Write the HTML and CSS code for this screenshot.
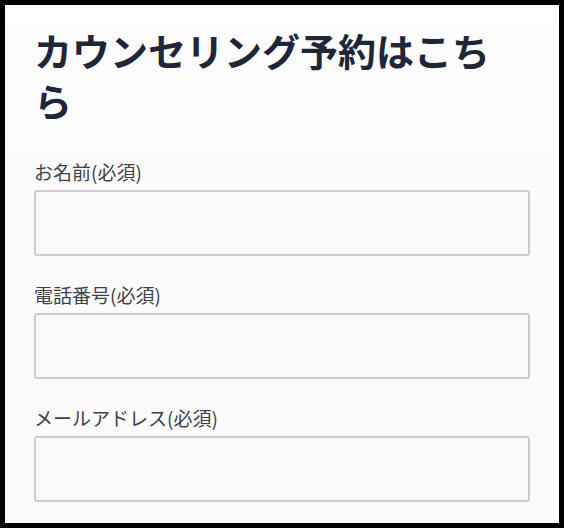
FILE: index.html
```html
<!DOCTYPE html>
<html lang="ja">
  <head>
    <meta charset="UTF-8" />
    <meta name="viewport" content="width=device-width, initial-scale=1.0" />
    <title>カウンセリング予約</title>
    <link rel="stylesheet" href="styles.css">
  </head>
  <body>
    <div id="screen">
      <div id="topBar"></div>
      <form id="reserveForm">
        <h1 class="formTitle">カウンセリング予約はこち<br />ら</h1>
        <div class="field">
          <label for="name">お名前(必須)</label>
          <input type="text" id="name" />
        </div>
        <div class="field">
          <label for="tel">電話番号(必須)</label>
          <input type="tel" id="tel" />
        </div>
        <div class="field">
          <label for="email">メールアドレス(必須)</label>
          <input type="email" id="email" />
        </div>
      </form>
    </div>
  </body>
</html>
```

FILE: styles.css
```css
* {
  box-sizing: border-box;
}
html {
  font-family: "Noto Sans CJK JP", "Noto Sans", sans-serif;
}
body {
  margin: 0;
  padding: 5px;
  background: #000;
  height: 528px;
  overflow: hidden;
}
#screen {
  width: 554px;
  height: 518px;
  background: #fff;
  overflow: hidden;
}
#topBar {
  height: 22px;
  border-bottom: 1px solid #e8e9ec;
  background: #fff;
}
#reserveForm {
  height: 496px;
  padding: 0 29px;
  background: linear-gradient(#fcfcfd, #fcfafb);
}
.formTitle {
  margin: -2px 0 34px;
  font-size: 38px;
  line-height: 50px;
  font-weight: 700;
  color: #1e2638;
}
.field {
  margin-bottom: 26px;
}
.field label {
  display: block;
  margin-bottom: 5px;
  font-size: 19px;
  line-height: 26px;
  color: #3c424b;
}
.field input {
  display: block;
  width: 100%;
  height: 66px;
  border: 2px solid #c9ccd1;
  border-radius: 3px;
  background: #f8fafc;
  font-size: 19px;
}
```
